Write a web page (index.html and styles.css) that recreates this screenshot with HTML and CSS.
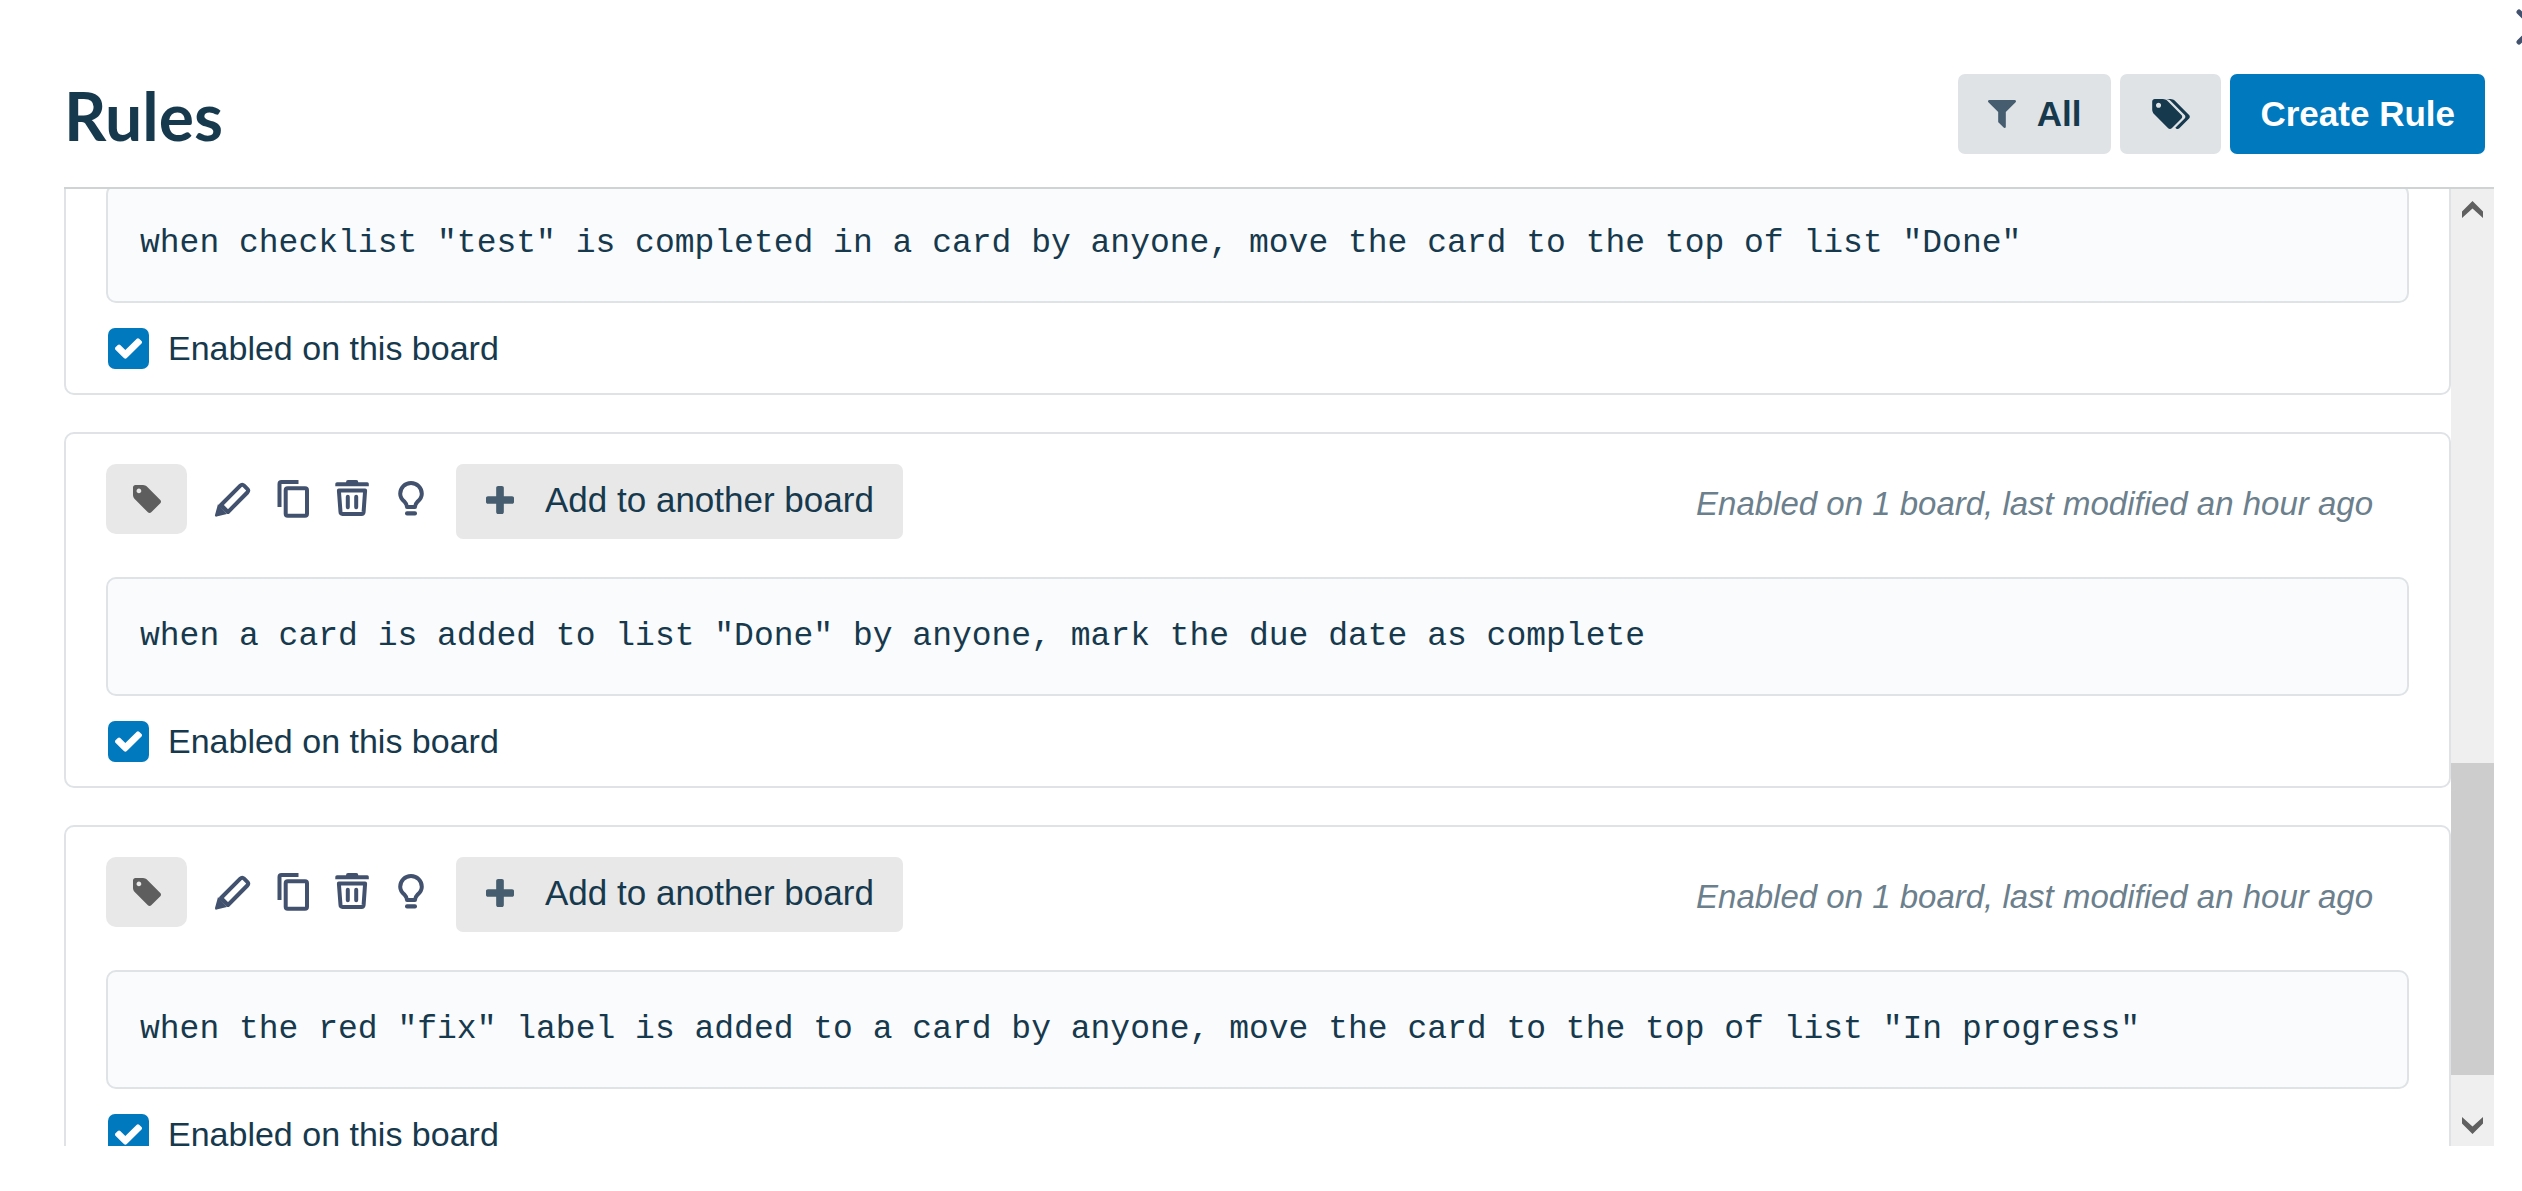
FILE: index.html
```html
<!DOCTYPE html>
<html lang="en">
<head>
<meta charset="utf-8">
<title>Rules</title>
<link rel="stylesheet" href="styles.css">
</head>
<body>
<svg class="sprite" aria-hidden="true">
  <symbol id="i-filter" viewBox="191 256 1410 1408"><path d="M1595 295q17 41-14 70l-493 493v742q0 42-39 59-13 5-25 5-27 0-45-19l-256-256q-19-19-19-45v-486l-493-493q-31-29-14-70 17-39 59-39h1280q42 0 59 39z"/></symbol>
  <symbol id="i-tag" viewBox="128 128 1515 1515"><path d="M576 448q0-53-37.500-90.500t-90.500-37.500-90.500 37.500-37.500 90.500 37.500 90.500 90.500 37.500 90.500-37.500 37.500-90.500zm1067 576q0 53-37 90l-491 492q-39 37-91 37-53 0-90-37l-715-716q-38-37-64.500-101t-26.500-117v-416q0-52 38-90t90-38h416q53 0 117 26.500t102 64.500l715 714q37 39 37 91z"/></symbol>
  <symbol id="i-tags" viewBox="128 128 1899 1515"><path d="M576 448q0-53-37.500-90.500t-90.500-37.500-90.500 37.500-37.500 90.500 37.500 90.500 90.500 37.500 90.500-37.500 37.500-90.500zm1067 576q0 53-37 90l-491 492q-39 37-91 37-53 0-90-37l-715-716q-38-37-64.500-101t-26.500-117v-416q0-52 38-90t90-38h416q53 0 117 26.500t102 64.500l715 714q37 39 37 91zm384 0q0 53-37 90l-491 492q-39 37-91 37-36 0-59-14t-53-45l470-470q37-37 37-90 0-52-37-91l-715-714q-38-38-102-64.500t-117-26.500h224q53 0 117 26.500t102 64.500l715 714q37 39 37 91z"/></symbol>
  <symbol id="i-plus" viewBox="192 128 1408 1408"><path d="M1600 736v192q0 40-28 68t-68 28h-416v416q0 40-28 68t-68 28h-192q-40 0-68-28t-28-68v-416h-416q-40 0-68-28t-28-68v-192q0-40 28-68t68-28h416v-416q0-40 28-68t68-28h192q40 0 68 28t28 68v416h416q40 0 68 28t28 68z"/></symbol>
  <symbol id="i-edit" viewBox="0 0 40 40"><path class="line" d="M9 26 28.300 6.600q1.900-1.900 3.800 0L35.300 9.800q1.800 1.800 0 3.700L16 33z"/><path d="M6 25 15 35 4.600 37.600Q2.700 37.900 3 36z"/></symbol>
  <symbol id="i-copy" viewBox="0 0 40 40"><path class="line" d="M7.500 28V5q0-2 2-2h17"/><rect class="line" x="13.700" y="9.300" width="21.300" height="27.400" rx="2"/></symbol>
  <symbol id="i-trash" viewBox="0 0 40 40"><path d="M5 3.300h9q0-2.300 2-2.300h8.300q2 0 2 2.300h9q1.500 0 1.500 1.500v2.500H3.300V4.800q0-1.500 1.700-1.500z"/><path class="line" d="M6.900 11.600H33.100L31.600 33q-.2 1.900-2 1.900H10.500q-1.900 0-2-1.900zM15.800 17.800v10.500M24.200 17.800v10.500"/></symbol>
  <symbol id="i-bulb" viewBox="0 0 40 40"><path class="line" d="M15 28q0-3-2.300-5.100Q8.200 19.300 8.200 14.800a10.800 10.800 0 0 1 21.600 0q0 4.500-4.500 8.100Q23 25 23 28z"/><rect x="13" y="32.300" width="12" height="4.200" rx="2"/></symbol>
  <symbol id="i-close" viewBox="0 0 36 36"><path class="cross" d="M3 3 33 33M33 3 3 33"/></symbol>
  <symbol id="i-up" viewBox="0 0 21 17"><path d="M0 10.500 10.500 0 21 10.500V17L10.500 7.500 0 17z"/></symbol>
</svg>

<main class="rules">
  <button class="close" type="button" aria-label="Close"><svg><use href="#i-close"/></svg></button>
  <header class="head">
    <h1>Rules</h1>
    <div class="actions">
      <button class="btn filter" type="button"><svg class="glyph soft"><use href="#i-filter"/></svg>All</button>
      <button class="btn labels" type="button" aria-label="Labels"><svg class="glyph wide"><use href="#i-tags"/></svg></button>
      <button class="btn primary" type="button">Create Rule</button>
    </div>
  </header>

  <div class="body">
    <div class="list" id="list">
      <article class="card">
        <p class="code">when checklist "test" is completed in a card by anyone, move the card to the top of list "Done"</p>
        <label class="enabled"><input type="checkbox" checked>Enabled on this board</label>
      </article>

      <article class="card">
        <div class="tools">
          <button class="tag" type="button" aria-label="Label rule"><svg class="glyph"><use href="#i-tag"/></svg></button>
          <div class="icons">
            <button type="button" aria-label="Edit"><svg><use href="#i-edit"/></svg></button>
            <button type="button" aria-label="Copy"><svg><use href="#i-copy"/></svg></button>
            <button type="button" aria-label="Delete"><svg><use href="#i-trash"/></svg></button>
            <button type="button" aria-label="Tips"><svg><use href="#i-bulb"/></svg></button>
          </div>
          <button class="add" type="button"><svg class="glyph soft"><use href="#i-plus"/></svg>Add to another board</button>
          <p class="meta">Enabled on 1 board, last modified an hour ago</p>
        </div>
        <p class="code">when a card is added to list "Done" by anyone, mark the due date as complete</p>
        <label class="enabled"><input type="checkbox" checked>Enabled on this board</label>
      </article>

      <article class="card">
        <div class="tools">
          <button class="tag" type="button" aria-label="Label rule"><svg class="glyph"><use href="#i-tag"/></svg></button>
          <div class="icons">
            <button type="button" aria-label="Edit"><svg><use href="#i-edit"/></svg></button>
            <button type="button" aria-label="Copy"><svg><use href="#i-copy"/></svg></button>
            <button type="button" aria-label="Delete"><svg><use href="#i-trash"/></svg></button>
            <button type="button" aria-label="Tips"><svg><use href="#i-bulb"/></svg></button>
          </div>
          <button class="add" type="button"><svg class="glyph soft"><use href="#i-plus"/></svg>Add to another board</button>
          <p class="meta">Enabled on 1 board, last modified an hour ago</p>
        </div>
        <p class="code">when the red "fix" label is added to a card by anyone, move the card to the top of list "In progress"</p>
        <label class="enabled"><input type="checkbox" checked>Enabled on this board</label>
      </article>
    </div>
    <div class="scrollbar" aria-hidden="true">
      <svg class="arrow"><use href="#i-up"/></svg>
      <div class="track"><div class="thumb"></div></div>
      <svg class="arrow down"><use href="#i-up"/></svg>
    </div>
  </div>
</main>
<script src="script.js"></script>
</body>
</html>
```
FILE: styles.css
```css
* {
  box-sizing: border-box;
}

body {
  margin: 0;
  background: #fff;
  color: #17394d;
  font-family: "Liberation Sans", Arial, sans-serif;
  font-size: 34px;
}

h1,
p {
  margin: 0;
}

button {
  margin: 0;
  padding: 0;
  border: 0;
  background: none;
  color: inherit;
  font: inherit;
  font-size: 35px;
  cursor: pointer;
}

svg {
  display: block;
  fill: currentColor;
}

.sprite {
  position: absolute;
  width: 0;
  height: 0;
}

.line {
  fill: none;
  stroke: currentColor;
  stroke-width: 4;
  stroke-linejoin: round;
}

#i-trash .line {
  stroke-linecap: round;
}

.cross {
  fill: none;
  stroke: currentColor;
  stroke-width: 5;
  stroke-linecap: round;
}

.glyph {
  flex: none;
  width: 28px;
  height: 28px;
}

.glyph.wide {
  width: 38px;
  height: 30px;
}

.glyph.soft {
  color: #455d6e;
}

.rules {
  position: relative;
  display: flex;
  flex-direction: column;
  height: 100vh;
  padding: 74px 28px 45px 64px;
  overflow: hidden;
}

.close {
  position: absolute;
  top: 9px;
  right: -30px;
  color: #42526e;
}

.close svg {
  width: 36px;
  height: 36px;
}

.head {
  display: flex;
  justify-content: space-between;
  align-items: flex-start;
  padding: 0 9px 33px 0;
  border-bottom: 2px solid #cfd3d3;
}

h1 {
  font-family: Lato, sans-serif;
  font-size: 66px;
  font-weight: 700;
  line-height: 80px;
  height: 80px;
  padding-top: 2px;
}

.actions {
  display: flex;
  gap: 9px;
}

.btn {
  display: flex;
  align-items: center;
  justify-content: center;
  gap: 21px;
  height: 80px;
  padding: 0 30px;
  border-radius: 7px;
  background: #dfe3e6;
  font-weight: 700;
}

.btn.labels {
  width: 101px;
}

.btn.primary {
  background: #0079bf;
  color: #fff;
}

.body {
  display: flex;
  flex: 1;
  min-height: 0;
}

.list {
  display: flex;
  flex: 1;
  flex-direction: column;
  gap: 37px;
  overflow-y: scroll;
  scrollbar-width: none;
}

.card {
  display: flex;
  flex: none;
  flex-direction: column;
  padding: 30px 40px 24px;
  border: 2px solid #dfe3e6;
  border-radius: 10px;
}

.tools {
  display: flex;
  align-items: flex-start;
  margin-bottom: 38px;
}

.tag {
  display: flex;
  justify-content: center;
  align-items: center;
  width: 81px;
  height: 70px;
  border-radius: 10px;
  background: #e8e8e8;
  color: #5e5e5e;
}

.icons {
  display: flex;
  margin: 0 14px 0 15px;
  color: #42526e;
}

.icons button {
  display: flex;
  justify-content: center;
  align-items: center;
  width: 60px;
  height: 70px;
}

.icons svg {
  width: 40px;
  height: 40px;
}

.add {
  display: flex;
  align-items: center;
  gap: 31px;
  height: 75px;
  padding: 0 29px 4px 30px;
  border-radius: 7px;
  background: #e8e8e8;
}

.meta {
  margin-left: auto;
  padding-right: 36px;
  color: #6b808c;
  font-size: 33px;
  font-style: italic;
  line-height: 80px;
  height: 75px;
}

.code {
  margin-bottom: 25px;
  padding: 36px 32px;
  border: 2px solid #dfe3e6;
  border-radius: 10px;
  background: #fafbfc;
  font-family: "Liberation Mono", monospace;
  font-size: 33px;
  line-height: 43px;
}

.enabled {
  display: flex;
  align-items: center;
  gap: 19px;
  padding-left: 2px;
  line-height: 41px;
}

.enabled input {
  appearance: none;
  width: 41px;
  height: 41px;
  margin: 0;
  border-radius: 7px;
}

.enabled input:checked {
  background: #0079bf url("data:image/svg+xml,%3Csvg xmlns='http://www.w3.org/2000/svg' viewBox='121 334 1550 1188'%3E%3Cpath fill='%23fff' d='M1671 566q0 40-28 68l-724 724-136 136q-28 28-68 28t-68-28l-136-136-362-362q-28-28-28-68t28-68l136-136q28-28 68-28t68 28l294 295 656-657q28-28 68-28t68 28l136 136q28 28 28 68z'/%3E%3C/svg%3E") center / 27px 21px no-repeat;
}

.scrollbar {
  display: flex;
  flex: none;
  flex-direction: column;
  align-items: center;
  width: 43px;
  padding: 12px 0;
  background: #efefef;
  color: #606060;
}

.arrow {
  width: 21px;
  height: 17px;
}

.arrow.down {
  transform: rotate(180deg);
}

.track {
  display: flex;
  flex: 1;
  flex-direction: column;
  justify-content: flex-end;
  width: 100%;
  padding: 14px 0 42px;
}

.thumb {
  height: 37%;
  background: #cdcdcd;
}
```
FILE: script.js
```js
// Open the list part-way down its first rule.
document.getElementById("list").scrollTop = 37;
```
